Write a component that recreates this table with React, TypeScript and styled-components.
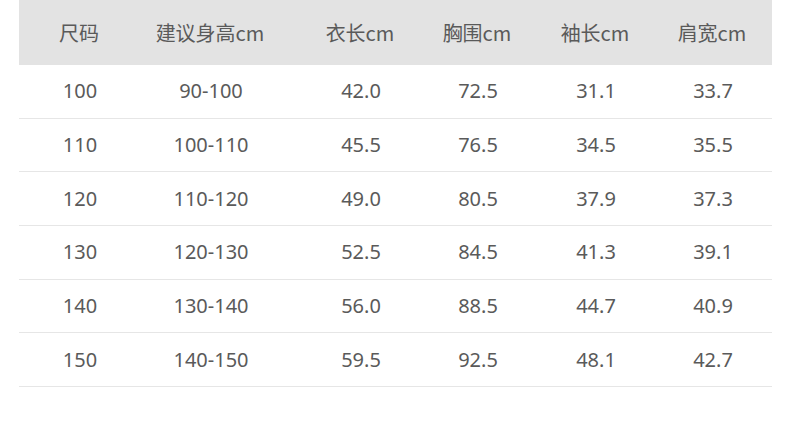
import * as React from "react";
import styled, { createGlobalStyle } from "styled-components";

const GlobalStyle = createGlobalStyle`
  html, body {
    margin: 0;
    padding: 0;
    background: #fff;
  }
  body {
    font-family: "Noto Sans", "Noto Sans CJK SC", sans-serif;
    color: #5a5a5a;
  }
`;

const headers = ["尺码", "建议身高cm", "衣长cm", "胸围cm", "袖长cm", "肩宽cm"];

const rows = [
  ["100", "90-100", "42.0", "72.5", "31.1", "33.7"],
  ["110", "100-110", "45.5", "76.5", "34.5", "35.5"],
  ["120", "110-120", "49.0", "80.5", "37.9", "37.3"],
  ["130", "120-130", "52.5", "84.5", "41.3", "39.1"],
  ["140", "130-140", "56.0", "88.5", "44.7", "40.9"],
  ["150", "140-150", "59.5", "92.5", "48.1", "42.7"],
];

const Page = styled.div`
  width: 790px;
  height: 431px;
  padding: 0 18px 0 19px;
  box-sizing: border-box;
`;

const Table = styled.div`
  width: 753px;
  display: flex;
  flex-direction: column;
`;

const Row = styled.div<{ $head?: boolean }>`
  display: grid;
  grid-template-columns: 122px 140px 160px 74px 162px 72px;
  padding-right: 23px;
  align-items: center;
  box-sizing: border-box;
  height: ${(p) => (p.$head ? "65px" : "53.7px")};
  background: ${(p) => (p.$head ? "#e3e3e3" : "#fff")};
  border-bottom: ${(p) => (p.$head ? "none" : "1px solid #e6e6e6")};
`;

const Cell = styled.div<{ $head?: boolean }>`
  text-align: center;
  white-space: nowrap;
  font-size: 20px;
  line-height: 1;
  color: #5a5a5a;
  font-family: ${(p) =>
    p.$head
      ? `"Noto Sans CJK SC", "Noto Sans", sans-serif`
      : `"Noto Sans", "Noto Sans CJK SC", sans-serif`};
  margin-left: ${(p) => (p.$head ? "-2px" : "0")};
`;

export default function App() {
  return (
    <>
      <GlobalStyle />
      <Page>
        <Table>
          <Row $head>
            {headers.map((h) => (
              <Cell $head key={h}>
                {h}
              </Cell>
            ))}
          </Row>
          {rows.map((r) => (
            <Row key={r[0]}>
              {r.map((v, i) => (
                <Cell key={i}>{v}</Cell>
              ))}
            </Row>
          ))}
        </Table>
      </Page>
    </>
  );
}
